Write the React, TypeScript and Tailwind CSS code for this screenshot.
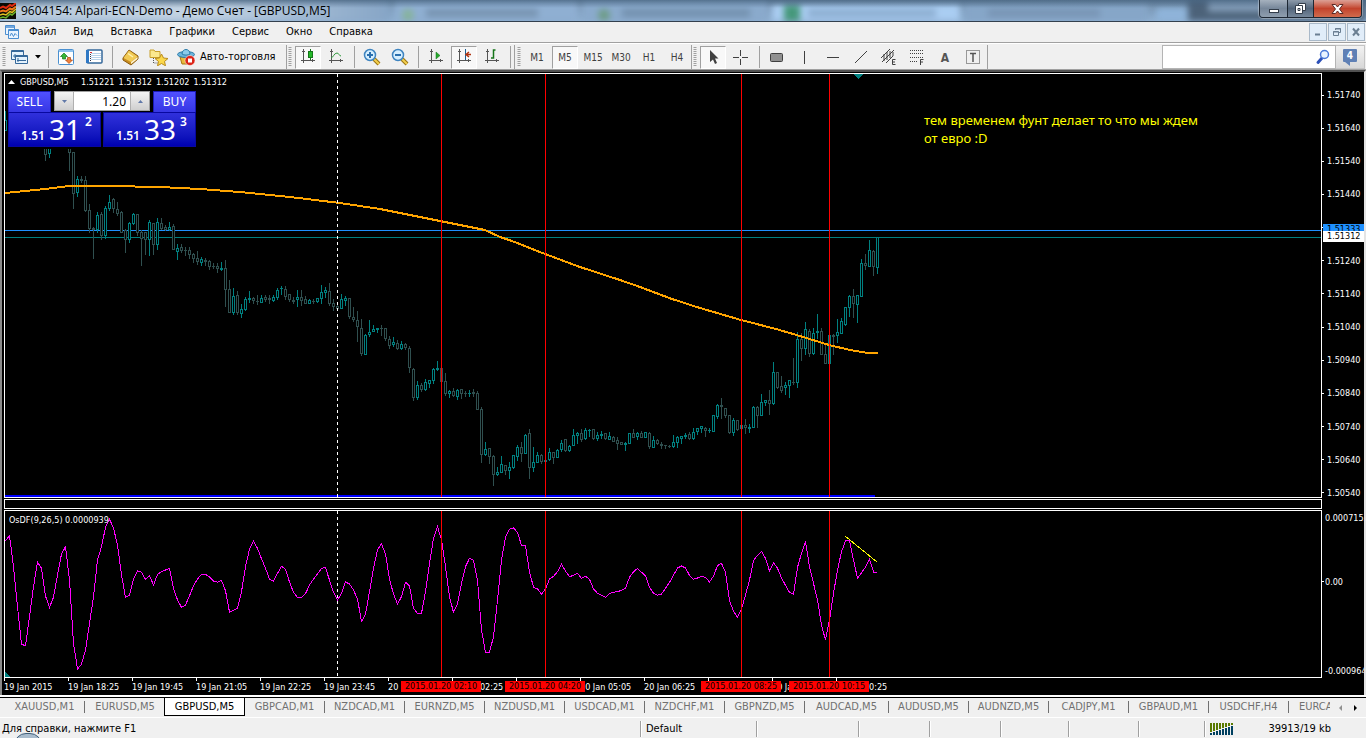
import React from "react";

const UI = "font-['DejaVu_Sans_Condensed','DejaVu_Sans',sans-serif]";
const SEGOE = "font-['Noto_Sans','Open_Sans',sans-serif]";

/* ---------- chart data ---------- */

type Candle = { x: number; up: boolean; high: number; top: number; bottom: number; low: number };

const FIRST_CANDLES = "u 111 120 131 131 5;d 140 145 155 161 45;u 140 145 154 158 49";

const CANDLES = `d 145 145 153 171;d 152 152 194 209;u 176 179 193 197;d 176 179 181 183;d 176 180 211 212;d 204 210 229 233;
d 227 228 230 259;u 212 215 230 233;d 212 214 236 240;u 206 208 236 239;u 195 202 209 211;d 198 199 209 213;d 202 209 214 216;
d 211 212 233 233;d 229 230 240 253;u 222 223 240 243;u 213 214 224 225;d 214 214 233 236;d 230 232 239 266;d 232 232 240 255;
u 220 222 240 256;d 223 223 245 255;u 218 222 245 250;d 218 223 229 230;d 225 227 230 231;u 222 227 230 231;d 224 226 250 250;
u 244 248 252 260;d 244 247 251 253;d 247 250 251 256;d 247 250 255 259;d 253 254 259 263;d 251 258 262 265;u 257 259 263 266;
d 258 260 262 266;d 260 261 267 270;d 263 266 267 269;d 263 266 269 273;u 262 268 270 271;d 260 268 290 307;d 280 289 313 313;
u 288 296 313 315;d 291 295 313 315;u 304 309 314 318;u 297 299 310 311;u 291 298 300 303;d 297 298 301 304;d 295 301 302 305;
u 295 298 303 303;d 295 297 300 302;d 295 298 300 304;u 295 297 301 302;u 288 290 298 300;u 286 288 289 295;d 286 289 297 300;
d 294 294 300 302;d 297 300 302 304;u 290 297 300 307;d 290 297 301 306;d 296 299 304 304;u 299 300 304 304;d 299 301 302 304;
u 298 298 302 303;u 285 292 299 304;u 287 290 293 298;d 283 291 304 306;d 299 303 307 311;d 304 306 309 311;u 294 299 309 309;
u 296 298 301 306;d 298 298 317 319;d 307 317 320 322;d 311 320 327 342;d 319 328 354 356;u 334 335 355 355;u 320 332 335 337;
u 325 329 332 332;u 328 328 330 333;d 325 328 329 336;d 328 328 339 341;d 336 339 346 349;u 337 342 345 347;d 340 343 349 350;
u 341 344 349 350;d 343 344 348 350;d 346 348 368 373;d 368 369 398 401;u 381 385 398 400;d 383 385 390 392;u 379 382 390 391;
u 380 380 384 388;u 368 369 381 384;u 361 368 370 371;d 368 368 382 382;d 373 381 394 396;u 390 391 394 398;d 388 391 396 397;
u 389 390 397 400;d 389 389 394 399;d 391 393 394 397;u 390 393 394 397;d 389 392 394 397;d 391 393 410 410;d 407 409 455 463;
u 442 449 455 456;d 448 448 457 464;d 455 456 475 486;u 467 472 475 476;u 456 464 473 473;d 465 465 471 475;u 462 467 471 479;
u 455 455 468 469;u 445 447 457 461;d 442 447 454 462;u 434 435 454 454;d 429 433 468 479;u 447 462 468 472;u 452 455 463 463;
d 454 455 462 464;u 460 460 462 462;u 448 452 460 461;d 452 452 458 464;u 449 450 458 458;u 440 443 450 452;d 439 439 451 452;
u 445 446 451 452;u 429 435 446 446;u 432 433 436 444;d 429 433 440 442;u 428 430 439 440;u 429 430 431 437;d 429 429 439 440;
u 432 435 439 441;u 431 434 436 439;d 433 433 439 440;u 432 436 440 440;d 436 437 442 442;d 437 440 444 450;d 442 442 445 445;
u 442 443 445 451;u 433 433 444 444;d 429 433 438 438;u 432 433 437 440;d 431 433 438 438;u 432 432 438 438;d 432 433 447 449;
u 436 440 448 448;d 439 440 444 445;d 442 444 446 449;d 445 445 446 449;d 445 446 447 448;u 435 442 447 448;u 436 437 443 448;
u 436 436 439 444;u 433 435 437 439;d 432 434 439 440;u 428 432 439 440;u 428 428 432 435;u 426 426 429 433;d 427 428 431 437;
u 428 430 431 433;u 415 415 432 432;u 404 405 417 419;d 398 405 407 419;d 408 408 416 418;d 415 415 433 434;u 418 420 433 436;
d 420 420 430 431;u 425 425 429 429;d 419 425 428 434;u 424 427 429 433;u 406 407 428 428;d 406 407 416 428;u 394 402 416 416;
u 400 400 403 406;d 390 400 404 415;u 362 372 404 405;d 372 372 388 389;d 376 386 391 393;u 382 385 388 395;u 380 380 386 398;
d 358 382 383 385;u 332 339 383 388;d 333 339 349 361;u 322 329 349 355;d 329 331 354 357;u 328 333 354 355;u 314 331 333 339;
d 328 331 355 355;d 344 354 364 364;u 335 335 364 364;d 334 335 337 355;u 319 332 336 343;u 318 321 334 334;u 307 307 325 326;
u 295 296 308 317;d 289 296 304 318;u 295 295 305 323;u 259 263 297 297;d 254 263 266 270;u 240 250 267 267;d 250 251 267 276;
u 237 237 268 274`;

const ORIGIN_X = 5;
const ORIGIN_Y = 74;

function parseCandles(src: string, startX: number): Candle[] {
  return src.split(";").map((row, i) => {
    const [dir, high, top, bottom, low, x] = row.trim().split(" ");
    return {
      x: (x ? Number(x) : startX + i * 4) - ORIGIN_X,
      up: dir === "u",
      high: Number(high) - ORIGIN_Y,
      top: Number(top) - ORIGIN_Y,
      bottom: Number(bottom) - ORIGIN_Y,
      low: Number(low) - ORIGIN_Y,
    };
  });
}

const candles = [...parseCandles(FIRST_CANDLES, 0), ...parseCandles(CANDLES, 69)];

const MOVING_AVERAGE = [
  [5, 193], [45, 189], [69, 186], [109, 186], [160, 187], [200, 189], [240, 192], [290, 197], [340, 203], [380, 209],
  [405, 214], [440, 221], [455, 224], [485, 230], [500, 237], [512, 241], [545, 254], [580, 267], [620, 280], [640, 287],
  [672, 299], [700, 308], [741, 320], [776, 329], [800, 336], [829, 345], [850, 350], [868, 353], [878, 353],
];

const OSCILLATOR = [
  122, 107, 200, 320, 433, 437, 350, 260, 187, 205, 288, 322, 292, 225, 162, 140, 240, 430, 507, 493, 450, 370, 290, 180, 140,
  82, 58, 84, 135, 225, 292, 285, 237, 213, 217, 238, 227, 255, 223, 215, 210, 205, 265, 300, 322, 315, 287, 258, 237, 223,
  223, 231, 243, 247, 241, 272, 336, 331, 325, 275, 200, 147, 124, 145, 176, 205, 237, 244, 220, 199, 208, 246, 277, 292, 292,
  281, 255, 237, 222, 205, 203, 240, 277, 300, 280, 246, 252, 270, 297, 364, 343, 275, 205, 150, 131, 162, 237, 282, 312, 290,
  247, 257, 325, 340, 340, 275, 190, 115, 80, 120, 200, 290, 337, 312, 250, 200, 175, 181, 240, 390, 457, 457, 410, 300, 180,
  112, 88, 84, 97, 136, 137, 215, 262, 267, 283, 267, 237, 229, 215, 193, 213, 230, 226, 220, 235, 229, 238, 267, 280, 286,
  292, 280, 277, 275, 271, 264, 232, 216, 205, 217, 227, 262, 280, 286, 282, 265, 247, 226, 204, 198, 204, 226, 238, 234, 229,
  232, 246, 228, 197, 190, 217, 302, 334, 352, 328, 285, 240, 182, 166, 154, 175, 213, 188, 205, 234, 256, 277, 283, 202, 160,
  124, 200, 250, 300, 375, 420, 360, 280, 210, 155, 123, 122, 180, 235, 218, 202, 177, 216, 220,
];

const MARKERS = [
  { x: 436, time: "2015.01.20 02:10", left: "left-[401px]" },
  { x: 540, time: "2015.01.20 04:20", left: "left-[505px]" },
  { x: 736, time: "2015.01.20 08:25", left: "left-[701px]" },
  { x: 824, time: "2015.01.20 10:15", left: "left-[789px]" },
];

/* An empty entry keeps its tick; its label is taken over by a marker. */
const TIMES = [
  "19 Jan 2015", "19 Jan 18:25", "19 Jan 19:45", "19 Jan 21:05", "19 Jan 22:25", "19 Jan 23:45", "20",
  "20 Jan 02:25", "", "20 Jan 05:05", "20 Jan 06:25", "", "20 Jan 09:05", "20 Jan 10:25",
];

const PRICES = [
  "1.51740", "1.51640", "1.51540", "1.51440", "1.51340", "1.51240", "1.51140", "1.51040", "1.50940", "1.50840", "1.50740",
  "1.50640", "1.50540",
];

function VerticalMarkers() {
  return (
    <>
      <line x1="332.5" x2="332.5" y1="0" y2="100%" stroke="#fff" strokeDasharray="3 3" />
      {MARKERS.map((m) => (
        <rect key={m.x} x={m.x} y="0" width="1" height="100%" fill="#ff0000" />
      ))}
    </>
  );
}

function PriceChart() {
  return (
    <svg className="block h-full w-full" shapeRendering="crispEdges" role="img" aria-label="GBPUSD M5">
      <rect x="0" y="156" width="100%" height="1" fill="#1e90ff" />
      <rect x="0" y="163" width="100%" height="1" fill="#008080" />
      {candles.map((c, i) => {
        const color = c.up ? "#008080" : "#2f4f4f";
        const h = Math.max(1, c.bottom - c.top);
        return (
          <g key={i}>
            <rect x={c.x} y={c.high} width="1" height={Math.max(1, c.low - c.high)} fill={color} />
            <rect x={c.x - 1} y={c.top} width="3" height={h} fill={color} />
            {h > 2 && <rect x={c.x} y={c.top + 1} width="1" height={h - 2} fill="#000" />}
          </g>
        );
      })}
      <polyline
        points={MOVING_AVERAGE.map(([x, y]) => `${x - ORIGIN_X},${y - ORIGIN_Y}`).join(" ")}
        fill="none"
        stroke="#ffa500"
        strokeWidth="2"
      />
      <rect x="0" y="421" width="870" height="2" fill="#0000ff" />
      <VerticalMarkers />
      <path d="M848 0h11l-5.500 5z" fill="#008080" />
    </svg>
  );
}

function OscillatorChart() {
  return (
    <svg className="block h-full w-full" shapeRendering="crispEdges" role="img" aria-label="OsDF">
      <polyline
        points={OSCILLATOR.map((v, i) => `${i * 4 + 0.5},${(v / 3 - 11).toFixed(1)}`).join(" ")}
        fill="none"
        stroke="#ff00ff"
      />
      <line x1="840" y1="25" x2="872" y2="51" stroke="#ffff00" />
      <VerticalMarkers />
      <path d="M0 161l5 5h-5z" fill="#008080" />
    </svg>
  );
}

/* ---------- window chrome ---------- */

function AppLogo() {
  return (
    <svg width="16" height="16" viewBox="0 0 16 16" className="shrink-0">
      <rect width="16" height="16" fill="#0a0a04" />
      <path d="M0 5l3-1.500 3 1.500 4-3 2 1 4-3" stroke="#e02a10" strokeWidth="2" fill="none" />
      <path d="M0 8.500l3-1 3 1 4-3 2 1 4-3" stroke="#f07818" strokeWidth="2" fill="none" />
      <path d="M0 12l3-1 3 1 4-3.500 2 1 4-3.500" stroke="#e0c020" strokeWidth="1.500" fill="none" />
      <path d="M0 15l3-1 3 1 4-4 2 1 4-3.500" stroke="#68b028" strokeWidth="1.500" fill="none" />
    </svg>
  );
}

function TitleBar() {
  return (
    <header className="relative flex h-[22px] overflow-hidden border-b border-[#33404e] bg-linear-to-b from-[#6c88a4] to-[#8fb0d2]">
      <div className="absolute inset-0 flex blur-[3px]" aria-hidden="true">
        <div className="w-[200px] shrink-0 bg-linear-to-r from-[#b5c8db] to-[#c3d3e3]" />
        <div className="w-[190px] shrink-0 bg-linear-to-r from-[#c3d3e3] to-[#86a5c6]" />
        <div className="ml-1 flex w-[184px] shrink-0 items-end bg-[#8fafd2] pl-2">
          <div className="h-3 w-3 rounded-full bg-[#86b39b]" />
          <div className="mb-1 ml-3 h-2 w-28 bg-[#7793b0]" />
        </div>
        <div className="ml-1 flex w-[186px] shrink-0 items-end bg-[#8aaacc] pl-4">
          <div className="h-3 w-3 rounded-full bg-[#6d9c86]" />
          <div className="mb-1 ml-3 h-2 w-32 bg-[#7390ae]" />
        </div>
        <div className="mt-1 ml-1 flex w-[188px] shrink-0 items-end bg-[#aacdf2] pl-3">
          <div className="h-4 w-4 bg-[#45987b]" />
          <div className="mb-1 ml-2 h-2 w-32 bg-[#8cadd0]" />
        </div>
        <div className="mt-1 ml-1 flex w-[184px] shrink-0 items-end bg-[#86a6c8] pl-6">
          <div className="mb-1 h-2 w-28 bg-[#7894b4]" />
        </div>
        <div className="mt-2 ml-2 w-8 shrink-0 rounded bg-[#8fb4da]" />
        <div className="flex-1 bg-[#4c6279] pl-5">
          <div className="h-3 w-14 bg-[#7f99b4]" />
        </div>
      </div>
      <div className="absolute inset-x-0 top-0 h-2 bg-linear-to-b from-[#3d5a76]/60 to-transparent" />
      <div className="relative flex w-full items-start">
        <div className="flex items-center gap-[5px] pt-[3px]">
          <AppLogo />
          <h1 className="font-['Open_Sans','Noto_Sans',sans-serif] text-[12px] leading-4 whitespace-nowrap text-black">
            9604154: Alpari-ECN-Demo - Демо Счет - [GBPUSD,M5]
          </h1>
        </div>
        <div className="mr-1 ml-auto flex h-[18px] overflow-hidden rounded-b border border-t-0 border-[#1d2733] shadow-[0_0_1px_1px_rgba(255,255,255,0.35)]">
          <button aria-label="Minimize" className="flex w-7 items-center justify-center border-r border-[#1d2733] bg-linear-to-b from-[#a5b1be] via-[#77879a] to-[#8f9eae]">
            <svg width="12" height="12"><rect x="1.500" y="6.500" width="9" height="3" fill="#fff" stroke="#333d4a" /></svg>
          </button>
          <button aria-label="Restore" className="flex w-[26px] items-center justify-center border-r border-[#1d2733] bg-linear-to-b from-[#8d9aa9] via-[#54667b] to-[#76879a]">
            <svg width="13" height="13" fill="#fff" stroke="#333d4a">
              <path d="M4.500 1.500h7v7h-7z" /><path d="M1.500 3.500h7v8h-7z" /><path d="M4 6.500h2v2h-2z" />
            </svg>
          </button>
          <button aria-label="Close" className="flex w-[47px] items-center justify-center bg-linear-to-b from-[#dba095] via-[#c2432c] to-[#d06a4c]">
            <svg width="13" height="12"><path d="M1 1.500h3.500l2 2.500 2-2.500H12L8.500 6l3.500 4.500H8.500l-2-2.500-2 2.500H1L4.500 6z" fill="#fff" stroke="#5b2a25" /></svg>
          </button>
        </div>
      </div>
    </header>
  );
}

const MENU = ["Файл", "Вид", "Вставка", "Графики", "Сервис", "Окно", "Справка"];

function MenuBar() {
  const child = "flex h-[18px] w-[18px] items-center justify-center border border-[#a9b9c9] bg-[#e1edf9]";
  return (
    <nav className={`${UI} flex h-[21px] items-center border-b border-[#a0a0a0] bg-[#f0f0f0] text-[11px] text-black`}>
      <svg width="16" height="16" viewBox="0 0 16 16" className="ml-1 mr-[9px] shrink-0" fill="#eaf4ff" stroke="#4b8ed0">
        <path d="M1.500 1.500h9v9h-9z" /><path d="M1 3h10" strokeWidth="1.500" />
        <path d="M4.500 5.500h10v9h-10z" /><path d="M4 6.500h11" /><path d="M6 12l1.500-3 2 3.500 1.500-3 2 2" fill="none" />
      </svg>
      <ul className="flex gap-[17px] pt-px">
        {MENU.map((m) => (
          <li key={m}><button className="whitespace-nowrap">{m}</button></li>
        ))}
      </ul>
      <div className="mr-px ml-auto flex gap-px">
        <button aria-label="Minimize chart" className={child}><svg width="10" height="10"><path d="M2 7.500h5" stroke="#6b7f93" strokeWidth="2" /></svg></button>
        <button aria-label="Restore chart" className={child}>
          <svg width="10" height="10" fill="none" stroke="#6b7f93"><path d="M3.500 3V1.500h5v4H7M3 2h6M1.500 4.500h5v4h-5zM1 5h6" /></svg>
        </button>
        <button aria-label="Close chart" className={child}><svg width="10" height="10"><path d="M2 1.500l6 7M8 1.500l-6 7" stroke="#6b7f93" strokeWidth="2" /></svg></button>
      </div>
    </nav>
  );
}

/* ---------- toolbar ---------- */

function Grip() {
  return (
    <span className="flex w-2 shrink-0 justify-center">
      <svg width="4" height="20" className="block"><path d="M2 0v20" stroke="#a0a0a0" strokeWidth="3" strokeDasharray="1 1" /></svg>
    </span>
  );
}

function Sep() {
  return (
    <span className="flex w-2 shrink-0 justify-center"><span className="h-[22px] w-px bg-[#a0a0a0]" /></span>
  );
}

function Tool({ label, pressed, children }: { label: string; pressed?: boolean; children: React.ReactNode }) {
  return (
    <button
      aria-label={label}
      aria-pressed={pressed}
      className={
        pressed
          ? "mx-px flex h-[23px] w-[26px] shrink-0 items-center justify-center border border-t-[#a0a0a0] border-r-white border-b-white border-l-[#a0a0a0] bg-[#f8f8f8]"
          : "mx-px flex h-[23px] w-[26px] shrink-0 items-center justify-center"
      }
    >
      {children}
    </button>
  );
}

function Axes() {
  return <path d="M3.500 1v14M1 12.500h14M2 3.500h3M12.500 11v3" stroke="#555" fill="none" />;
}

function Icon({ children, w = 16 }: { children: React.ReactNode; w?: number }) {
  return <svg width={w} height="18" viewBox={`0 0 ${w} 18`} fill="none">{children}</svg>;
}

function Lens({ plus }: { plus?: boolean }) {
  return (
    <Icon w={18}>
      <path d="M11 11l5 5" stroke="#9a7414" strokeWidth="4" />
      <path d="M11 11l5 5" stroke="#f3cf4e" strokeWidth="2" />
      <circle cx="7" cy="7" r="5.500" fill="#d6efff" stroke="#3e84c0" strokeWidth="1.500" />
      <path d={plus ? "M4 7h6M7 4v6" : "M4 7h6"} stroke="#2a6fae" strokeWidth="2" />
    </Icon>
  );
}

const PERIODS = ["M1", "M5", "M15", "M30", "H1", "H4"];

function Toolbar() {
  const group = "flex h-full items-center border-r border-[#a0a0a0]";
  return (
    <div className={`${UI} flex h-[27px] items-center border-t border-b border-t-white border-b-[#a0a0a0] bg-[#f0f0f0] pt-px text-black`}>
      <div className={group}>
        <Grip />
        <button aria-label="New chart" className="flex w-9 items-center justify-center gap-[6px]">
          <svg width="18" height="16" fill="#e4f2fd" stroke="#35689a">
            <path d="M.5 1.500h12v9h-12z" /><path d="M1 2.500h11M4 5v4M2 7h6" />
            <path d="M4.500 6.500h12v8h-12z" /><path d="M5 7.500h11M7 9v4M6 11.500h9" />
          </svg>
          <svg width="6" height="4"><path d="M0 0h6L3 3.500z" fill="#000" /></svg>
        </button>
        <Sep />
        <Tool label="Market watch">
          <Icon w={17}>
            <rect x=".5" y="1.500" width="15" height="15" rx="1" fill="#fff" stroke="#4a90d0" /><path d="M1 3h14" stroke="#8cc0ee" strokeWidth="2" />
            <path d="M6 5l3.500 3.500H7.500V11h-3V8.500h-2z" fill="#37b837" stroke="#177a17" strokeWidth=".7" /><path d="M11 15.500L7.500 12h2V9.500h3V12h2z" fill="#f0813c" stroke="#a8400c" strokeWidth=".7" />
          </Icon>
        </Tool>
        <Tool label="Data window">
          <Icon w={17}>
            <rect x="1" y="2" width="15" height="13" rx="1" fill="#fff" stroke="#35689a" strokeWidth="1.500" /><path d="M1.500 2v13" stroke="#2f78c4" strokeWidth="3" />
            <path d="M5 5.500h10M5 7.500h10M5 9.500h10M5 11.500h10" stroke="#b9d3ea" /><path d="M4 4.500h2" stroke="#d33" /><path d="M4.500 6v8" stroke="#334" strokeDasharray="1 1" />
          </Icon>
        </Tool>
        <Sep />
        <Tool label="Navigator">
          <Icon w={17}>
            <path d="M1 10l6-8 9 6v3l-7 6-8-5z" fill="#c98d20" stroke="#8a5a0c" /><path d="M1.500 10L7 2.500l8.500 6L9 14z" fill="#f2cb56" /><path d="M9 14l6.500-5v2L9 16z" fill="#fff4d0" /><path d="M6 5.500l5 3.500" stroke="#fff2b0" strokeWidth="1.500" />
          </Icon>
        </Tool>
        <Tool label="Favorites">
          <Icon w={19}>
            <path d="M1 2h4l1 1.500h5v6H1z" fill="#fbe88e" stroke="#c9a02c" /><path d="M4.500 10v5h4" stroke="#555" strokeDasharray="1 1" />
            <path d="M12.500 6l2 4 4.500.5-3.500 3 1 4.300-4-2.300-4 2.300 1-4.300-3.500-3 4.500-.5z" fill="#fbd84b" stroke="#b98b1c" />
          </Icon>
        </Tool>
        <button className="flex items-center text-[11px]">
          <span className="flex w-7 justify-center">
            <Icon w={19}>
              <path d="M3 9l2 7h7l3-7z" fill="#e8b93c" stroke="#a87814" />
              <ellipse cx="9" cy="6.500" rx="8.500" ry="3" fill="#6db6dc" stroke="#2c7ba8" /><path d="M5 6c0-6 8-6 8 0-2 1.500-6 1.500-8 0z" fill="#8ccbea" stroke="#2c7ba8" />
              <circle cx="13" cy="12.500" r="5" fill="#dc2418" stroke="#fff" strokeWidth=".5" /><rect x="11" y="10.500" width="4" height="4" fill="#fff" />
            </Icon>
          </span>
          <span className="w-[86px] text-left whitespace-nowrap">Авто-торговля</span>
        </button>
      </div>
      <div className="-ml-px flex h-full items-center border-r border-[#a0a0a0]">
        <Grip />
        <Tool label="Candlesticks" pressed>
          <Icon><Axes /><path d="M10.500 1v11" stroke="#16751a" /><rect x="8.500" y="3.500" width="4" height="6" fill="#22b928" stroke="#16751a" /></Icon>
        </Tool>
        <Tool label="Line chart"><Icon><Axes /><path d="M3 10c2 0 3-5 6-5 2 0 2 3 4 3" stroke="#2f9a3c" /></Icon></Tool>
        <Sep />
        <Tool label="Zoom in"><Lens plus /></Tool>
        <Tool label="Zoom out"><Lens /></Tool>
        <Sep />
        <Tool label="Auto scroll"><Icon><Axes /><path d="M8 4l4 3.500L8 11z" fill="#25a82c" stroke="#16751a" strokeWidth=".5" /></Icon></Tool>
        <Tool label="Chart shift" pressed><Icon><Axes /><path d="M9.500 1v11" stroke="#1b5f94" /><path d="M15 6.500h-4M13 4l-3 2.500L13 9" stroke="#b03310" strokeWidth="1.500" /></Icon></Tool>
        <Tool label="Indicators"><Icon><Axes /><path d="M11.500 2H9.500v8H7" stroke="#16751a" strokeWidth="1.500" /></Icon></Tool>
        <Sep />
      </div>
      <div className={group}>
        <Grip />
        {PERIODS.map((p) => (
          <Tool key={p} label={p} pressed={p === "M5"}>
            <span className="pt-px text-[10px] text-[#404040]">{p}</span>
          </Tool>
        ))}
      </div>
      <div className="-ml-px flex h-full items-center border-r border-[#a0a0a0]">
        <Grip />
        <Tool label="Cursor" pressed><Icon><path d="M5 2v12l3-2.500 2 4.500 2-1-2-4.500h3.500z" fill="#404040" /></Icon></Tool>
        <Tool label="Crosshair"><Icon><path d="M0 9.500h6M9 9.500h6M7.500 2v6M7.500 11v6" stroke="#404040" /></Icon></Tool>
        <Sep />
        <Tool label="Rectangle"><Icon><rect x="1.500" y="5.500" width="12" height="8" rx="1" fill="#909090" stroke="#404040" /></Icon></Tool>
        <Tool label="Vertical line"><Icon><path d="M7.500 3v13" stroke="#404040" /></Icon></Tool>
        <Tool label="Horizontal line"><Icon><path d="M2 9.500h12" stroke="#404040" /></Icon></Tool>
        <Tool label="Trend line"><Icon><path d="M2 15L14 3" stroke="#404040" /></Icon></Tool>
        <Tool label="Equidistant channel">
          <Icon><path d="M0 10L9 1M1 14L13 2M5 15l7-7M3 6v7M6 4v8M9 3v7M12 4v4" stroke="#404040" /><path d="M14.500 11.500h-3v5h3M11.500 14h2.500" stroke="#404040" /></Icon>
        </Tool>
        <Tool label="Fibonacci">
          <Icon><path d="M1 2.500h14M1 5.500h14M1 9.500h14M1 13.500h8" stroke="#404040" strokeDasharray="1 1" /><path d="M14.500 11.500h-3v5.500M11.500 14h2.500" stroke="#404040" /></Icon>
        </Tool>
        <Tool label="Text"><span className="pt-[2px] text-[12px] font-bold text-[#555]">A</span></Tool>
        <Tool label="Text label">
          <Icon><rect x="1.500" y="2.500" width="13" height="13" stroke="#404040" strokeDasharray="1 1" /><path d="M5 5.500h6M8 5v9" stroke="#555" strokeWidth="1.500" /></Icon>
        </Tool>
      </div>
      <label className="ml-auto flex h-6 w-[174px] items-center border border-[#b4b4b4] bg-white">
        <input aria-label="Search" className="min-w-0 flex-1 bg-transparent px-1 text-[11px] outline-none" />
        <svg width="16" height="16" className="mr-1" fill="none">
          <path d="M7 9l-4 4.500" stroke="#2c50b8" strokeWidth="3" strokeLinecap="round" /><circle cx="9.500" cy="5.500" r="4" fill="#e8f3ff" stroke="#4a79d8" strokeWidth="1.500" />
        </svg>
      </label>
      <button aria-label="Messages: 4" className="mr-px flex h-6 w-[29px] items-center justify-center border border-l-0 border-[#c4c4c4] bg-linear-to-b from-[#f2f2f2] to-[#d8d8d8]">
        <svg width="17" height="20">
          <path d="M2 2h12q1 0 1 1v11q0 1-1 1H8v4l-5-4H2q-1 0-1-1V3q0-1 1-1z" fill="#5f80b5" />
          <text x="8" y="12" fontSize="10" fontWeight="bold" textAnchor="middle" fill="#fff" fontFamily="DejaVu Sans Condensed, sans-serif">4</text>
        </svg>
      </button>
    </div>
  );
}

/* ---------- one-click trading ---------- */

function QuoteButton({ side, pips, point }: { side: "SELL" | "BUY"; pips: string; point: string }) {
  return (
    <button className={`${side === "SELL" ? "items-start" : "items-end"} flex w-[93px] flex-col text-white`}>
      <span className="flex h-[21px] w-[43px] justify-center border border-b-0 border-[#1a1ab8] bg-linear-to-b from-[#5050ff] to-[#3636e4] text-[12px] leading-5">
        {side}
      </span>
      <span className="flex h-[35px] w-full items-end justify-center gap-1 border border-[#0808a0] bg-linear-to-b from-[#3030dc] to-[#0000b0] pb-[2px] pl-1">
        <span className="text-[12px] leading-4 font-semibold">1.51</span>
        <span className="text-[28px] leading-[30px]">{pips}</span>
        <span className="self-start pt-px text-[12px] leading-4 font-semibold">{point}</span>
      </span>
    </button>
  );
}

function TradePanel() {
  const spin = "flex h-full w-[19px] items-center justify-center bg-linear-to-b from-[#f4f4f4] to-[#cfcfcf]";
  return (
    <div className={`${SEGOE} absolute top-[17px] left-[2px] flex gap-[2px] bg-black pl-px pr-px pb-[2px]`}>
      <QuoteButton side="SELL" pips="31" point="2" />
      <QuoteButton side="BUY" pips="33" point="3" />
      <div className="absolute top-0 left-[47px] flex h-[20px] w-[96px] border border-[#a0a0a0] bg-white">
        <button aria-label="Decrease volume" className={`${spin} border-r border-[#b0b0b0]`}><svg width="5" height="3"><path d="M0 0h5L2.500 3z" fill="#6078a8" /></svg></button>
        <input aria-label="Volume" defaultValue="1.20" className="min-w-0 flex-1 bg-white px-1 text-right text-[12px] text-black outline-none" />
        <button aria-label="Increase volume" className={`${spin} border-l border-[#b0b0b0]`}><svg width="5" height="3"><path d="M0 3h5L2.500 0z" fill="#6078a8" /></svg></button>
      </div>
    </div>
  );
}

/* ---------- chart window ---------- */

function ChartWindow() {
  return (
    <main className={`${UI} flex flex-1 flex-col border-t-2 border-r-2 border-l-2 border-t-[#505050] border-r-[#e4e4e4] border-l-[#8a8a8a] bg-black pt-px text-[9px] leading-3 text-white`}>
      <section className="flex min-h-[425px] flex-1 overflow-hidden">
        <div className="relative ml-[2px] min-w-0 flex-1 border border-white">
          <div className="absolute inset-0 overflow-hidden"><PriceChart /></div>
          <div className="absolute top-[2px] left-[3px] flex items-center whitespace-nowrap">
            <svg width="7" height="4" className="mr-[5px]"><path d="M0 4h7L3.500 0z" fill="#fff" /></svg>
            <span className="w-[61px]">GBPUSD,M5</span>
            <span className="flex gap-1"><span>1.51221</span><span>1.51312</span><span>1.51202</span><span>1.51312</span></span>
          </div>
          <TradePanel />
          <p className={`${SEGOE} absolute top-[37px] left-[919px] w-[290px] text-[13px] leading-[18px] text-[#ffff00]`}>
            тем временем фунт делает то что мы ждем от евро :D
          </p>
        </div>
        <div className="relative flex w-[42px] flex-col justify-between overflow-hidden pt-4">
          <div className="flex flex-1 flex-col justify-between">
            {PRICES.map((p) => (
              <span key={p} className="-mb-px flex h-3 items-center gap-[3px]"><i className="h-px w-[2px] bg-white" />{p}</span>
            ))}
          </div>
          <span className="absolute top-[151px] right-0 left-px h-[11px] bg-[#1e90ff] pl-1 leading-[11px] text-black">1.51333</span>
          <span className="absolute top-[158px] right-0 left-px h-[11px] bg-white pl-1 leading-[11px] text-black">1.51312</span>
        </div>
      </section>
      <div className="my-px mr-[42px] ml-[2px] h-[10px] border border-white" />
      <section className="flex h-[168px] overflow-hidden">
        <div className="relative ml-[2px] min-w-0 flex-1 border border-white">
          <div className="absolute inset-0 overflow-hidden"><OscillatorChart /></div>
          <span className="absolute top-[3px] left-1 whitespace-nowrap">OsDF(9,26,5) 0.0000939</span>
        </div>
        <div className="flex w-[42px] flex-col justify-between overflow-hidden pt-[2px] pb-px whitespace-nowrap">
          <span className="pl-[3px]">0.0007153</span>
          <span className="mb-[26px] flex items-center gap-px"><i className="h-px w-[2px] bg-white" />0.00</span>
          <span className="pl-[3px]">-0.0009641</span>
        </div>
      </section>
      <div className="relative -ml-[2px] flex h-[17px] overflow-hidden pl-1">
        {TIMES.map((t, i) => (
          <span key={i} className="w-16 shrink-0 whitespace-nowrap"><i className="block h-[3px] w-px bg-white" />{t}</span>
        ))}
        {MARKERS.map((m) => (
          <span key={m.x} className={`${m.left} absolute top-[3px] h-[11px] w-20 bg-[#ff0000] text-center leading-[11px] whitespace-nowrap text-black`}>
            {m.time}
          </span>
        ))}
      </div>
    </main>
  );
}

const TABS = [
  "XAUUSD,M1", "EURUSD,M5", "GBPUSD,M5", "GBPCAD,M1", "NZDCAD,M1", "EURNZD,M5", "NZDUSD,M1", "USDCAD,M1", "NZDCHF,M1",
  "GBPNZD,M5", "AUDCAD,M5", "AUDUSD,M5", "AUDNZD,M5", "CADJPY,M1", "GBPAUD,M1", "USDCHF,H4", "EURCAD,M5",
];

function TabBar() {
  return (
    <div className={`${UI} flex h-[22px] border-t-2 border-white bg-[#f0f0f0] text-[11px] text-[#707070]`}>
      <div role="tablist" className="flex min-w-0 flex-1 overflow-hidden border-t border-black pl-[5px]">
        {TABS.map((t) => {
          const active = t === "GBPUSD,M5";
          return (
            <button
              key={t}
              role="tab"
              aria-selected={active}
              className={
                active
                  ? "-mt-px -ml-px h-[19px] w-[81px] shrink-0 border border-t-0 border-black bg-white pt-px leading-4 text-black"
                  : `${t === "AUDCAD,M5" ? "w-[84px]" : "w-20"} flex h-[18px] shrink-0 items-center`
              }
            >
              {active ? t : (
                <>
                  <span className="flex-1 text-center">{t}</span>
                  {t !== "EURUSD,M5" && <i className="h-3 w-px bg-[#707070]" />}
                </>
              )}
            </button>
          );
        })}
      </div>
      <div className="flex w-9 items-center gap-3 border-t border-black pl-2">
        <button aria-label="Scroll left"><svg width="4" height="8"><path d="M4 1v6L1 4z" fill="#909090" /></svg></button>
        <button aria-label="Scroll right"><svg width="4" height="8"><path d="M0 1v6l3-3z" fill="#000" /></svg></button>
      </div>
    </div>
  );
}

function StatusBar() {
  const cell = "h-4 border-l border-[#a0a0a0] shadow-[inset_1px_0_0_#fff]";
  return (
    <footer className={`${UI} relative flex h-[21px] items-center overflow-hidden border-t border-white bg-[#f0f0f0] pt-[2px] text-[11px] text-black`}>
      <span className="flex-1 pl-[2px]">Для справки, нажмите F1</span>
      <span className={`${cell} w-[116px] pl-[5px] leading-4`}>Default</span>
      <span className={`${cell} w-[102px]`} />
      <span className={`${cell} w-[71px]`} />
      <span className={`${cell} w-[71px]`} />
      <span className={`${cell} w-[68px]`} />
      <span className={`${cell} w-[70px]`} />
      <span className={`${cell} w-[66px]`} />
      <span className={`${cell} flex w-[162px] items-center pl-[5px]`}>
        <svg width="24" height="12" shapeRendering="crispEdges">
          {[0, 1, 2, 3, 4, 5, 6, 7].map((i) => (
            <g key={i}>
              <rect x={i * 3} y="0" width="2" height={9 - i} fill="#5a7a00" />
              <rect x={i * 3} y={10 - i} width="2" height={2 + i} fill="#004060" />
            </g>
          ))}
        </svg>
        <span className="ml-auto pr-[35px]">39913/19 kb</span>
      </span>
      <span className="absolute top-[15px] left-[14px] h-6 w-7 rounded-full border border-[#40607c] bg-[#a9bccd]" />
    </footer>
  );
}

export default function App() {
  return (
    <div className="flex min-h-screen flex-col overflow-hidden bg-[#f0f0f0]">
      <TitleBar />
      <MenuBar />
      <Toolbar />
      <ChartWindow />
      <TabBar />
      <StatusBar />
    </div>
  );
}
